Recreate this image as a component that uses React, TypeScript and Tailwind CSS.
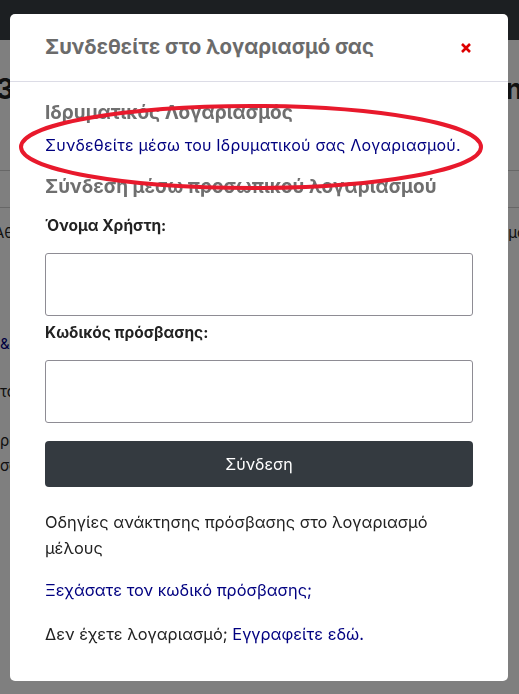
import React from "react";

const font = { fontFamily: 'Inter, "Noto Sans", sans-serif' };

function BackgroundPage() {
    return (
        <div className="min-h-[694px] bg-white text-[#222]">
            <div className="h-[40px] bg-[#383e44]" />
            <div className="flex justify-between items-end h-[70px] text-[28px] font-bold text-[#222]">
                <span className="-ml-[4px]">3Α</span>
                <span className="-mr-[4px]">nn</span>
            </div>
            <div className="h-[61px] border-b border-[#cfcfcf]" />
            <div className="h-[37px] border-b border-[#cfcfcf]" />
            <div className="flex justify-between pt-[14px] text-[15px]">
                <span className="-ml-[6px]">Αθε</span>
                <span className="-mr-[8px]">ήμα</span>
            </div>
            <div className="pt-[88px] text-[15px] text-[#000080]">& Πρ</div>
            <div className="pt-[26px] text-[15px]">το υ</div>
            <div className="pt-[24px] text-[15px] leading-[25px]">
                <div>ροί</div>
                <div>σας</div>
            </div>
        </div>
    );
}

function Field({ label }: { label: string }) {
    return (
        <div className="flex flex-col">
            <label className="text-[15.5px] font-bold text-[#222] leading-[22px] mb-[16px]">{label}</label>
            <input
                type="text"
                className="h-[63px] w-full border border-[#8e8c94] rounded-[3px] bg-white outline-none"
            />
        </div>
    );
}

function LoginModal() {
    return (
        <div className="fixed left-[10px] top-[14px] w-[498px] bg-white rounded-[5px]" style={font}>
            <div className="flex items-center justify-between h-[68px] px-[35px] border-b border-[#dcdce6]">
                <h2 className="text-[20.4px] font-bold text-[#6b6b6b]">Συνδεθείτε στο λογαριασμό σας</h2>
                <button className="mr-[2px]" aria-label="close">
                    <svg width="10" height="10" viewBox="0 0 10 10">
                        <path d="M1 1 L9 9 M9 1 L1 9" stroke="#dd0000" strokeWidth="2.6" />
                    </svg>
                </button>
            </div>

            <div className="relative px-[35px] pt-[17px] pb-[34px]">
                <h3 className="text-[19px] font-bold text-[#6f6f6f] leading-[28px]">Ιδρυματικός Λογαριασμός</h3>
                <a className="block text-[16px] tracking-[0.2px] text-[#000080] leading-[24px] mt-[6px]">
                    Συνδεθείτε μέσω του Ιδρυματικού σας Λογαριασμού.
                </a>
                <h3 className="text-[19px] font-bold text-[#6f6f6f] leading-[28px] mt-[16px]">
                    Σύνδεση μέσω προσωπικού λογαριασμού
                </h3>

                <div className="flex flex-col gap-[6px] mt-[14px]">
                    <Field label="Όνομα Χρήστη:" />
                    <Field label="Κωδικός πρόσβασης:" />
                </div>

                <button className="mt-[18px] w-full h-[46px] rounded-[4px] bg-[#343a40] text-white text-[16px]">
                    Σύνδεση
                </button>

                <div className="mt-[22px] text-[16.4px] text-[#222] leading-[26px] flex flex-col gap-[16px]">
                    <p>Οδηγίες ανάκτησης πρόσβασης στο λογαριασμό μέλους</p>
                    <a className="text-[#000080]">Ξεχάσατε τον κωδικό πρόσβασης;</a>
                    <p className="pt-[2px]">
                        Δεν έχετε λογαριασμό; <a className="text-[#000080]">Εγγραφείτε εδώ.</a>
                    </p>
                </div>

                {/* hand-drawn annotation ring */}
                <svg className="absolute left-[8px] top-[20px] pointer-events-none" width="466" height="90" viewBox="0 0 466 90">
                    <ellipse cx="233" cy="45" rx="230" ry="41" fill="none" stroke="#e8192c" strokeWidth="4" />
                </svg>
            </div>
        </div>
    );
}

export default function App() {
    return (
        <div className="relative min-h-[694px] overflow-hidden" style={font}>
            <BackgroundPage />
            <div className="fixed inset-0 bg-black/50" />
            <LoginModal />
        </div>
    );
}
